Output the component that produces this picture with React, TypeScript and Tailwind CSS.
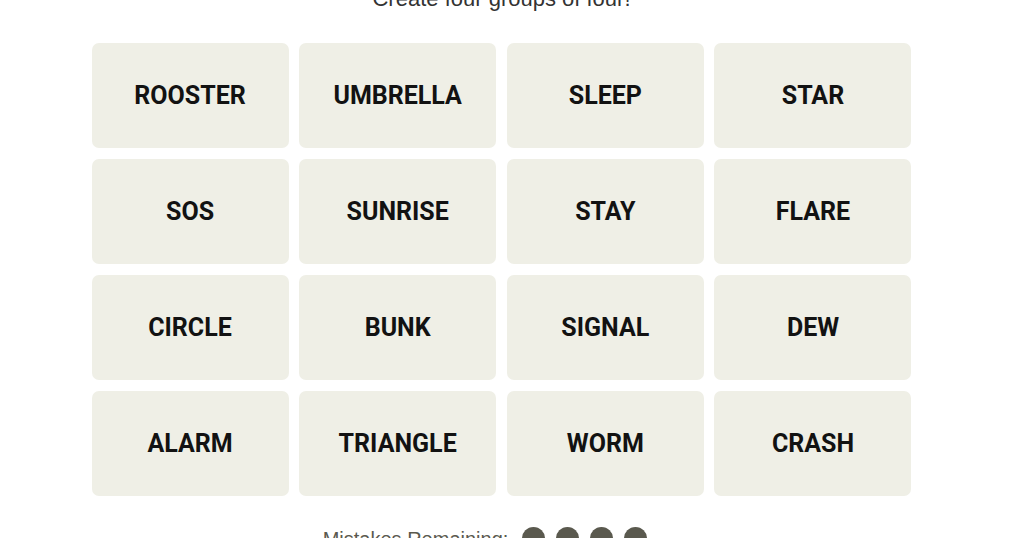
import React from "react";

const words = [
  "ROOSTER", "UMBRELLA", "SLEEP", "STAR",
  "SOS", "SUNRISE", "STAY", "FLARE",
  "CIRCLE", "BUNK", "SIGNAL", "DEW",
  "ALARM", "TRIANGLE", "WORM", "CRASH",
];

const App: React.FC = () => {
  return (
    <div className="h-[538px] w-[1024px] overflow-hidden bg-white">
      <div className="flex w-[1003px] flex-col items-center">
        {/* heading, mostly scrolled off */}
        <p className="-mt-[12px] text-[22px] leading-[22px] text-[#333333] [font-family:'Liberation_Sans',Arial,sans-serif]">
          Create four groups of four!
        </p>

        <div className="mt-[33px] grid grid-cols-[repeat(4,197px)] gap-x-[10.67px] gap-y-[11px]">
          {words.map((w) => (
            <button
              key={w}
              className="flex h-[105px] items-center justify-center rounded-[7px] bg-[#efefe6] text-[25px] font-bold text-[#121212] [font-family:Roboto,'Liberation_Sans',sans-serif]"
            >
              {w}
            </button>
          ))}
        </div>

        {/* mistakes remaining */}
        <div className="mt-[31px] flex items-center gap-[14px] pr-[33px]">
          <span className="text-[20px] leading-[22px] text-[#5a594e] [font-family:'Liberation_Sans',Arial,sans-serif]">
            Mistakes Remaining:
          </span>
          <div className="flex items-center gap-[11px]">
            {[0, 1, 2, 3].map((i) => (
              <span key={i} className="h-[23px] w-[23px] rounded-full bg-[#5a594e]" />
            ))}
          </div>
        </div>
      </div>
    </div>
  );
};

export default App;
